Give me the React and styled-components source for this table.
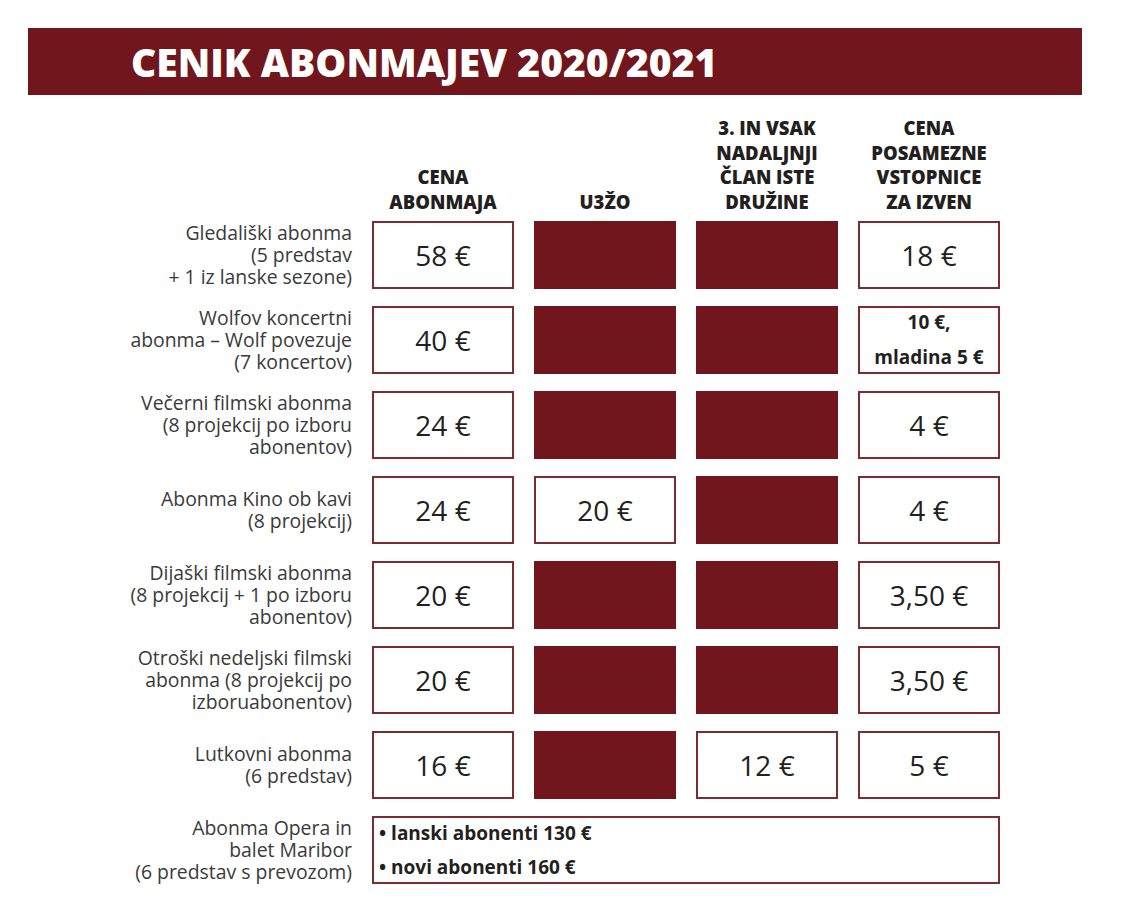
import React from 'react';
import styled, { createGlobalStyle } from 'styled-components';

const GlobalStyle = createGlobalStyle`
  body {
    margin: 0;
    background: #ffffff;
    font-family: "Open Sans", "Liberation Sans", sans-serif;
    color: #231f20;
  }
`;

const Page = styled.div`
  width: 1123px;
  padding: 28px 0 0 28px;
  box-sizing: border-box;
`;

const Banner = styled.div`
  width: 1054px;
  height: 67px;
  background: #71161c;
  display: flex;
  align-items: center;
  padding-left: 103px;
  box-sizing: border-box;
`;

const Title = styled.h1`
  margin: 0;
  color: #ffffff;
  font-size: 39px;
  font-weight: 800;
  letter-spacing: 0;
`;

const Table = styled.div`
  display: grid;
  grid-template-columns: 324px repeat(4, 142px);
  column-gap: 20px;
  row-gap: 17px;
  margin-top: 21px;
`;

const Head = styled.div`
  align-self: end;
  text-align: center;
  font-size: 18.5px;
  line-height: 24.7px;
  font-weight: 800;
  color: #231f20;
  margin-bottom: -11px;
`;

const Label = styled.div`
  align-self: center;
  text-align: right;
  font-size: 19.4px;
  line-height: 22px;
  color: #3a3a3a;
`;

const Cell = styled.div`
  height: 68px;
  box-sizing: border-box;
  display: flex;
  flex-direction: column;
  align-items: center;
  justify-content: center;
  font-size: ${p => (p.$small ? '19px' : '28px')};
  font-weight: ${p => (p.$small ? 700 : 400)};
  line-height: ${p => (p.$small ? '35px' : '1')};
  color: #231f20;
  background: ${p => (p.$filled ? '#71161c' : '#ffffff')};
  border: 2px solid ${p => (p.$filled ? '#71161c' : '#7d2a30')};
`;

const WideCell = styled.div`
  grid-column: 2 / span 4;
  height: 68px;
  box-sizing: border-box;
  border: 2px solid #7d2a30;
  display: flex;
  flex-direction: column;
  justify-content: center;
  padding-left: 5px;
  font-size: 19px;
  font-weight: 700;
  line-height: 34px;
  color: #231f20;
`;

const rows = [
  { label: ['Gledališki abonma', '(5 predstav', '+ 1 iz lanske sezone)'], cells: ['58 €', null, null, '18 €'] },
  { label: ['Wolfov koncertni', 'abonma – Wolf povezuje', '(7 koncertov)'], cells: ['40 €', null, null, ['10 €,', 'mladina 5 €']] },
  { label: ['Večerni filmski abonma', '(8 projekcij po izboru', 'abonentov)'], cells: ['24 €', null, null, '4 €'] },
  { label: ['Abonma Kino ob kavi', '(8 projekcij)'], cells: ['24 €', '20 €', null, '4 €'] },
  { label: ['Dijaški filmski abonma', '(8 projekcij + 1 po izboru', 'abonentov)'], cells: ['20 €', null, null, '3,50 €'] },
  { label: ['Otroški nedeljski filmski', 'abonma (8 projekcij po', 'izboruabonentov)'], cells: ['20 €', null, null, '3,50 €'] },
  { label: ['Lutkovni abonma', '(6 predstav)'], cells: ['16 €', null, '12 €', '5 €'] },
];

const heads = [
  ['CENA', 'ABONMAJA'],
  ['U3ŽO'],
  ['3. IN VSAK', 'NADALJNJI', 'ČLAN ISTE', 'DRUŽINE'],
  ['CENA', 'POSAMEZNE', 'VSTOPNICE', 'ZA IZVEN'],
];

const broken = arr =>
  arr.map((t, i) => (
    <React.Fragment key={i}>
      {i > 0 && <br />}
      {t}
    </React.Fragment>
  ));

export default function App() {
  return (
    <Page>
      <GlobalStyle />
      <Banner>
        <Title>CENIK ABONMAJEV 2020/2021</Title>
      </Banner>
      <Table>
        <div />
        {heads.map((h, i) => (
          <Head key={i}>{broken(h)}</Head>
        ))}
        {rows.map((r, i) => (
          <React.Fragment key={i}>
            <Label>{broken(r.label)}</Label>
            {r.cells.map((c, j) =>
              c === null ? (
                <Cell key={j} $filled />
              ) : Array.isArray(c) ? (
                <Cell key={j} $small>{c.map((t, k) => <div key={k}>{t}</div>)}</Cell>
              ) : (
                <Cell key={j}>{c}</Cell>
              )
            )}
          </React.Fragment>
        ))}
        <Label>{broken(['Abonma Opera in', 'balet Maribor', '(6 predstav s prevozom)'])}</Label>
        <WideCell>
          <div>• lanski abonenti 130 €</div>
          <div>• novi abonenti 160 €</div>
        </WideCell>
      </Table>
    </Page>
  );
}
